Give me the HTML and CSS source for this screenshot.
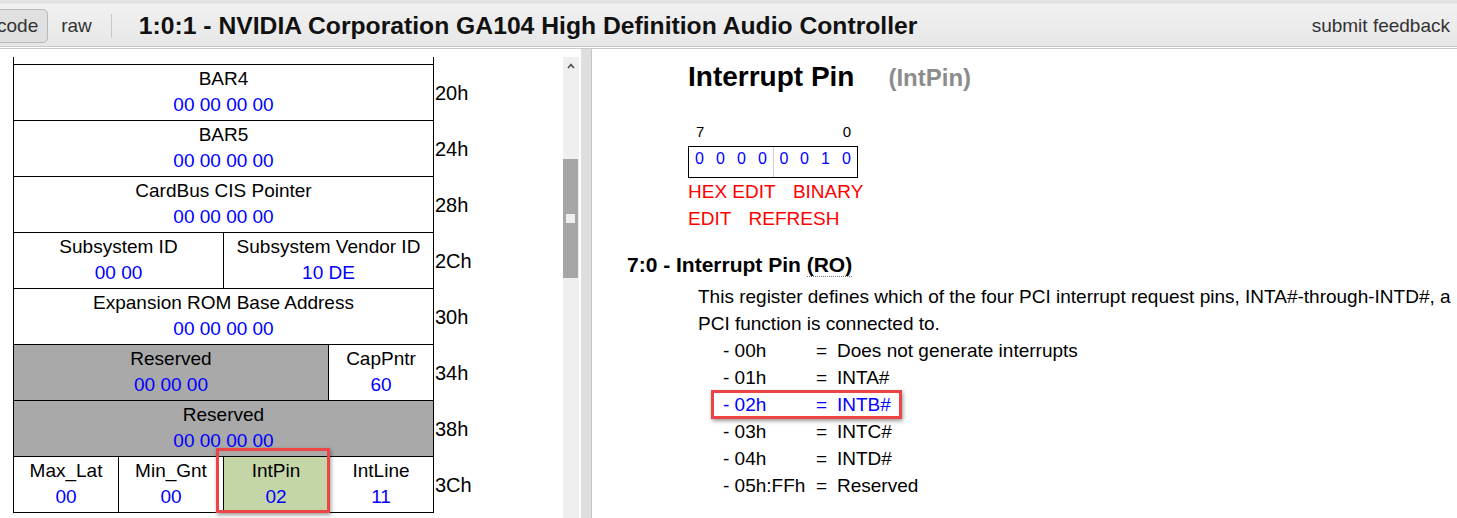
FILE: index.html
```html
<!DOCTYPE html>
<html lang="en">
<head>
    <meta charset="UTF-8">
    <meta name="viewport" content="width=device-width, initial-scale=1.0">
    <title>1:0:1 - NVIDIA Corporation GA104 High Definition Audio Controller</title>
    <link rel="stylesheet" href="styles.css">
</head>
<body>
    <div class="topbar">
        <a class="tab active">code</a>
        <a class="tab">raw</a>
        <span class="sep"></span>
        <div class="title">1:0:1 - NVIDIA Corporation GA104 High Definition Audio Controller</div>
        <a class="feedback">submit feedback</a>
    </div>

    <div class="main">
        <div class="left">
            <div class="regs">
                <table class="cfg">
                    <colgroup>
                        <col class="c"><col class="c"><col class="c"><col class="c"><col class="o">
                    </colgroup>
                    <tr class="cut"><td class="r" colspan="4"></td><td class="off"></td></tr>
                    <tr>
                        <td class="r" colspan="4">BAR4<br><span class="val">00 00 00 00</span></td>
                        <td class="off">20h</td>
                    </tr>
                    <tr>
                        <td class="r" colspan="4">BAR5<br><span class="val">00 00 00 00</span></td>
                        <td class="off">24h</td>
                    </tr>
                    <tr>
                        <td class="r" colspan="4">CardBus CIS Pointer<br><span class="val">00 00 00 00</span></td>
                        <td class="off">28h</td>
                    </tr>
                    <tr>
                        <td class="r" colspan="2">Subsystem ID<br><span class="val">00 00</span></td>
                        <td class="r" colspan="2">Subsystem Vendor ID<br><span class="val">10 DE</span></td>
                        <td class="off">2Ch</td>
                    </tr>
                    <tr>
                        <td class="r" colspan="4">Expansion ROM Base Address<br><span class="val">00 00 00 00</span></td>
                        <td class="off">30h</td>
                    </tr>
                    <tr>
                        <td class="r gray" colspan="3">Reserved<br><span class="val">00 00 00</span></td>
                        <td class="r">CapPntr<br><span class="val">60</span></td>
                        <td class="off">34h</td>
                    </tr>
                    <tr>
                        <td class="r gray" colspan="4">Reserved<br><span class="val">00 00 00 00</span></td>
                        <td class="off">38h</td>
                    </tr>
                    <tr>
                        <td class="r">Max_Lat<br><span class="val">00</span></td>
                        <td class="r">Min_Gnt<br><span class="val">00</span></td>
                        <td class="r pin">IntPin<br><span class="val">02</span><span class="mark pin-mark"></span></td>
                        <td class="r">IntLine<br><span class="val">11</span></td>
                        <td class="off">3Ch</td>
                    </tr>
                </table>
            </div>
            <div class="vscroll">
                <div class="up">
                    <svg width="8" height="6" viewBox="0 0 8 6"><path d="M1 5 L4 1.6 L7 5" fill="none" stroke="#555" stroke-width="1.7"/></svg>
                </div>
                <div class="thumb" style="margin-top: 85px; height: 119px;"><span class="grip"></span></div>
            </div>
        </div>
        <div class="divider"></div>

        <div class="right">
            <div class="rhead">
                <h1>Interrupt Pin</h1>
                <span class="alias">(IntPin)</span>
            </div>

            <div class="bits">
                <div class="bitnums"><span>7</span><span>0</span></div>
                <div class="bitbox">
                    <span>0</span><span>0</span><span>0</span><span>0</span>
                    <span class="lo">0</span><span>0</span><span>1</span><span>0</span>
                </div>
            </div>
            <div class="acts">
                <a>HEX EDIT</a> <a>BINARY EDIT</a> <a>REFRESH</a>
            </div>

            <h2 class="field">7:0 - Interrupt Pin <abbr title="Read Only">(RO)</abbr></h2>
            <p class="desc">This register defines which of the four PCI interrupt request pins, INTA#-through-INTD#, a PCI function is connected to.</p>
            <ul class="opts">
                <li><span>- 00h</span><span>=</span><span>Does not generate interrupts</span></li>
                <li><span>- 01h</span><span>=</span><span>INTA#</span></li>
                <li class="cur"><span>- 02h</span><span>=</span><span>INTB#</span><span class="mark row-mark"></span></li>
                <li><span>- 03h</span><span>=</span><span>INTC#</span></li>
                <li><span>- 04h</span><span>=</span><span>INTD#</span></li>
                <li><span>- 05h:FFh</span><span>=</span><span>Reserved</span></li>
            </ul>
        </div>
    </div>
</body>
</html>
```
FILE: styles.css
```css
*{
    box-sizing: border-box;
}
html, body{
    margin: 0;
    height: 100%;
}
body{
    font-family: "Liberation Sans", Arial, Helvetica, sans-serif;
    color: #000;
    background: #fff;
    overflow: hidden;
}

/* top bar */
.topbar{
    display: flex;
    align-items: center;
    height: 49px;
    padding-top: 5px;
    border-bottom: 3px double #c9c9c9;
    background: linear-gradient(#e2e2e2 0, #e2e2e2 3px, #f1f1f1 4px, #e7e7e7 100%);
    background-clip: padding-box;
    white-space: nowrap;
}
.tab{
    font-size: 19px;
    color: #333;
    padding: 0 9px;
    line-height: 32px;
    border: 1px solid transparent;
    border-radius: 5px;
}
.tab.active{
    margin-left: -13px;
    background: #e0e0e0;
    border-color: #b9b9b9;
}
.tab + .tab{
    margin-left: 3px;
}
.sep{
    width: 1px;
    height: 24px;
    background: #c8c8c8;
    margin-left: 9px;
}
.title{
    flex: 1;
    margin-left: 27px;
    font-size: 24.7px;
    font-weight: bold;
    color: #111;
}
.feedback{
    font-size: 19px;
    color: #333;
    padding-right: 7px;
}

/* panes */
.main{
    display: flex;
    height: 469px;
}
.left{
    width: 581px;
    padding-top: 8px;
    display: flex;
}
.regs{
    flex: 1;
    padding-left: 13px;
    overflow: hidden;
}
.vscroll{
    width: 16px;
    margin-right: 2px;
    background: #efefef;
    display: flex;
    flex-direction: column;
}
.up{
    height: 17px;
    display: flex;
    align-items: center;
    justify-content: center;
}
.up svg{
    display: block;
}
.thumb{
    width: 15px;
    background: #a6a6a6;
    display: flex;
    align-items: center;
    justify-content: center;
}
.grip{
    width: 9px;
    height: 9px;
    background: #eeeeee;
}
.divider{
    width: 11px;
    background: #dedede;
    border-right: 1px solid #c6c6c6;
}
.right{
    flex: 1;
    padding: 12px 0 0 35px;
    overflow: hidden;
}

/* register map */
.cfg{
    border-collapse: collapse;
    table-layout: fixed;
    font-size: 19px;
    line-height: 26px;
}
.cfg col.c{
    width: 105px;
}
.cfg col.o{
    width: 110px;
}
.cfg td{
    padding: 0;
    height: 56px;
    vertical-align: middle;
}
.cfg td.r{
    border: 1px solid #000;
    text-align: center;
    white-space: nowrap;
}
.cfg tr.cut td{
    height: 7px;
    border-top: none;
}
.cfg td.off{
    border: none;
    padding: 2px 0 0 1px;
    font-size: 20px;
    text-align: left;
}
.val{
    color: #0000ff;
}
.gray{
    background: #a9a9a9;
}
.pin{
    background: #c4d5a8;
    position: relative;
}
.mark{
    position: absolute;
    border: 3px solid #ec4545;
    box-shadow: 1px 2px 4px rgba(0, 0, 0, 0.4);
    pointer-events: none;
}
.pin-mark{
    left: -8px;
    top: -9px;
    right: -2px;
    bottom: -1px;
}

/* register detail */
.rhead{
    margin-left: 61px;
    display: flex;
    align-items: baseline;
    height: 32px;
}
.rhead h1{
    margin: 0;
    font-size: 28px;
    line-height: 32px;
}
.alias{
    margin-left: 34px;
    font-size: 24px;
    font-weight: bold;
    color: #8c8c8c;
}
.bits{
    margin: 31px 0 0 61px;
    width: 170px;
}
.bitnums{
    display: flex;
    justify-content: space-between;
    padding: 0 7px 0 8px;
    font-size: 15px;
    line-height: 16px;
}
.bitbox{
    display: flex;
    margin-top: 6px;
    height: 32px;
    border: 1px solid #000;
}
.bitbox span{
    width: 21px;
    text-align: center;
    color: #0000ff;
    font-size: 16px;
    line-height: 24px;
}
.bitbox span.lo{
    border-left: 1px solid #cfcfcf;
}
.acts{
    margin-left: 61px;
    width: 178px;
    font-size: 19px;
    line-height: 27px;
}
.acts a{
    color: #ff0000;
    margin-right: 12px;
}
.field{
    margin: 19px 0 0 0;
    font-size: 21px;
    line-height: 27px;
}
.field abbr{
    text-decoration: none;
    border-bottom: 1px dotted #777;
}
.desc{
    margin: 5px 0 0 71px;
    width: 765px;
    font-size: 19px;
    line-height: 27px;
}
.opts{
    margin: 0 0 0 96px;
    padding: 0;
    list-style: none;
    font-size: 19px;
    line-height: 27px;
}
.opts li{
    display: grid;
    grid-template-columns: 93px 21px auto;
    position: relative;
    width: 500px;
}
.opts li.cur{
    color: #0000ff;
}
.row-mark{
    left: -12px;
    top: -1px;
    width: 191px;
    height: 29px;
}
```
